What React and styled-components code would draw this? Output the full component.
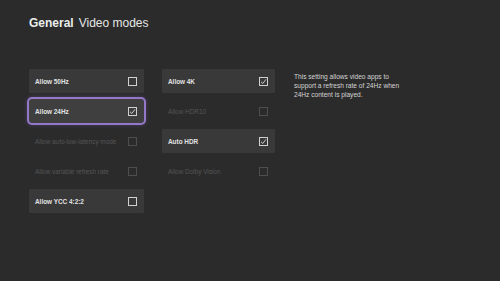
import React from "react";
import styled, { createGlobalStyle } from "styled-components";

const Global = createGlobalStyle`
  html, body { margin: 0; padding: 0; background: #2b2b2b; }
  body { font-family: "Liberation Sans", Arial, sans-serif; }
`;

const Page = styled.div`
  width: 500px;
  height: 281px;
  background: #2b2b2b;
  box-sizing: border-box;
  padding: 16px 0 0 29px;
  overflow: hidden;
`;

const Title = styled.h1`
  margin: 0;
  height: 14px;
  font-size: 12px;
  line-height: 14px;
  font-weight: 400;
  color: #e6e6e6;
  display: flex;
  gap: 5px;
`;

const Strong = styled.span`
  font-weight: 700;
  color: #ececec;
`;

const Content = styled.div`
  margin-top: 39px;
  display: flex;
  align-items: flex-start;
`;

const Column = styled.div`
  width: ${(p) => p.$w}px;
  margin-right: ${(p) => p.$mr}px;
  display: flex;
  flex-direction: column;
  gap: 6px;
`;

const Tile = styled.div`
  height: 24px;
  box-sizing: border-box;
  padding: 0 7px 0 6px;
  display: flex;
  align-items: center;
  justify-content: space-between;
  background: ${(p) => (p.$disabled ? "transparent" : p.$focused ? "#3f3f3f" : "#393939")};
  box-shadow: ${(p) =>
    p.$focused ? "0 0 0 2px #9478c9, 0 0 4px 2px rgba(130,100,190,0.35)" : "none"};
  border-radius: ${(p) => (p.$focused ? "3px" : "1px")};
`;

const Label = styled.span`
  font-size: 6.4px;
  color: ${(p) => (p.$disabled ? "#555555" : "#e2e2e2")};
  font-weight: ${(p) => (p.$disabled ? 400 : 700)};
  white-space: nowrap;
`;

const Box = styled.span`
  width: 9px;
  height: 9px;
  box-sizing: border-box;
  border: 1px solid ${(p) => (p.$disabled ? "#4e4e4e" : "#d0d0d0")};
  display: flex;
  align-items: center;
  justify-content: center;
`;

const Desc = styled.p`
  margin: 3px 0 0;
  width: 110px;
  font-size: 6.6px;
  line-height: 9px;
  color: #d4d4d4;
`;

const Check = () => (
  <svg width="7" height="7" viewBox="0 0 7 7">
    <path d="M1 3.8 L2.8 5.5 L6 1.3" fill="none" stroke="#d8d8d8" strokeWidth="0.9" />
  </svg>
);

const Option = ({ label, checked, disabled, focused }) => (
  <Tile $disabled={disabled} $focused={focused}>
    <Label $disabled={disabled}>{label}</Label>
    <Box $disabled={disabled}>{checked && <Check />}</Box>
  </Tile>
);

const col1 = [
  { label: "Allow 50Hz" },
  { label: "Allow 24Hz", checked: true, focused: true },
  { label: "Allow auto-low-latency mode", disabled: true },
  { label: "Allow variable refresh rate", disabled: true },
  { label: "Allow YCC 4:2:2" },
];

const col2 = [
  { label: "Allow 4K", checked: true },
  { label: "Allow HDR10", disabled: true },
  { label: "Auto HDR", checked: true },
  { label: "Allow Dolby Vision", disabled: true },
];

export default function App() {
  return (
    <>
      <Global />
      <Page>
        <Title>
          <Strong>General</Strong>
          <span>Video modes</span>
        </Title>
        <Content>
          <Column $w={115} $mr={18}>
            {col1.map((o) => (
              <Option key={o.label} {...o} />
            ))}
          </Column>
          <Column $w={113} $mr={19}>
            {col2.map((o) => (
              <Option key={o.label} {...o} />
            ))}
          </Column>
          <Desc>
            This setting allows video apps to support a refresh rate of 24Hz when 24Hz
            content is played.
          </Desc>
        </Content>
      </Page>
    </>
  );
}
